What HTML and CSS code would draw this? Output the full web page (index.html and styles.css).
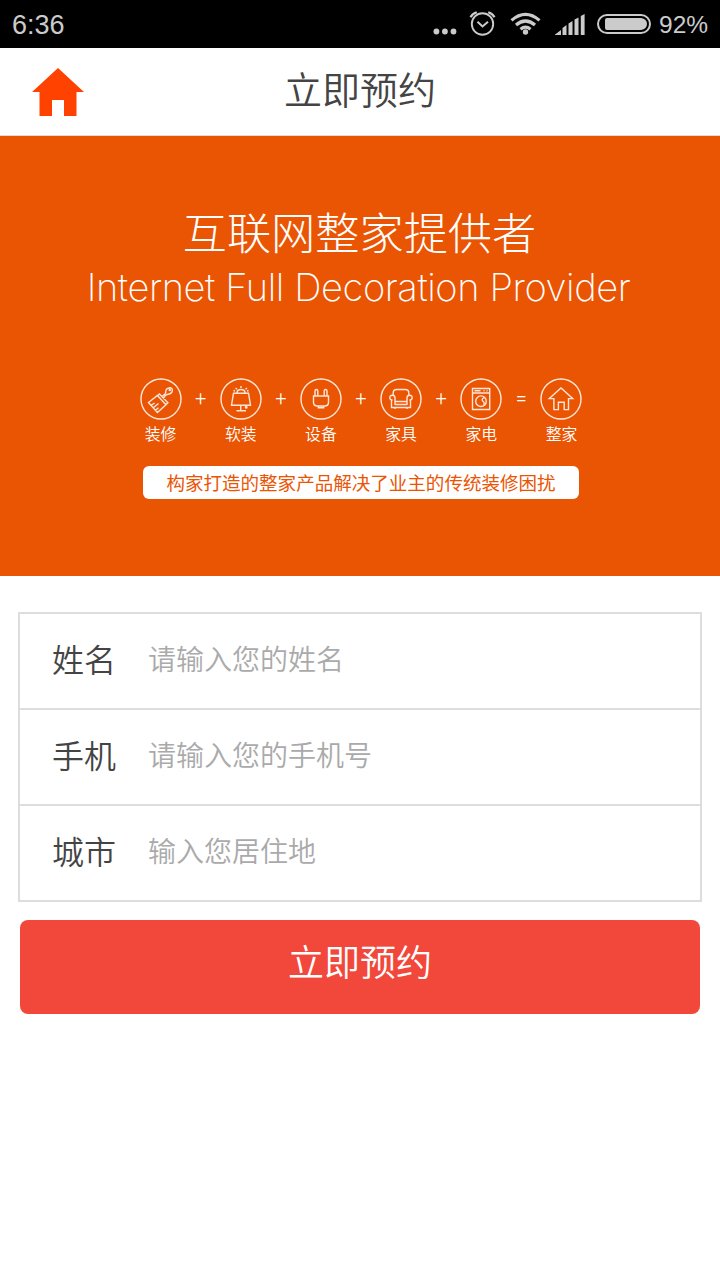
FILE: index.html
```html
<!DOCTYPE html>
<html lang="zh-CN">
<head>
<meta charset="utf-8">
<title>立即预约</title>
<link rel="stylesheet" href="styles.css">
</head>
<body>
<div class="status">
  <span class="clock">6:36</span>
  <svg class="status-icons" width="222" height="48" viewBox="430 0 222 48" fill="none" stroke="#cbcbcb">
    <g fill="#cbcbcb" stroke="none"><circle cx="436.4" cy="31.5" r="2.9"/><circle cx="444.9" cy="31.5" r="2.9"/><circle cx="453.5" cy="31.5" r="2.9"/></g>
    <circle cx="482.5" cy="24" r="10.7" stroke-width="1.9"/>
    <path d="M477.5 21.7l5 4.8 5.5-4.8" stroke-width="2"/>
    <path d="M470.5 17.3q2-3.8 6.3-5M494.500 17.300q-2-3.800-6.300-5" stroke-width="2.2"/>
    <path d="M511.500 20.400q14-12 28 0M516 25q9.500-8 19 0M520.500 29.200q5-4 10 0" stroke-width="3.200"/>
    <circle cx="525.500" cy="32" r="2.700" fill="#cbcbcb" stroke="none"/>
    <path d="M554.500 35l6.500-5v5zM562.500 35v-7l4-3v10zM568.500 35V23.500l4-2.500v14zM574.500 35V19.500l4-2V35zM580.800 35V16l3.800-2v21z" fill="#cbcbcb" stroke="none"/>
    <rect x="598" y="15" width="52" height="18" rx="9" stroke-width="2"/>
    <path d="M607 18h34q6 1 6 6t-6 6h-34q-2 0-2-2v-8q0-2 2-2z" fill="#cbcbcb" stroke="none"/>
  </svg>
  <span class="percent">92%</span>
</div>
<header class="topbar">
  <svg class="home" width="52" height="48" viewBox="0 0 52 48"><path d="M26 0L52 24H44.500V48H32V32H20V48H7.500V24H0z" fill="#ff4200"/></svg>
  <h1 class="title">立即预约</h1>
</header>
<section class="banner">
  <p class="slogan">互联网整家提供者</p>
  <p class="slogan-en">Internet Full Decoration Provider</p>
  <div class="formula">
    <div class="item">
      <svg class="icon" viewBox="0 0 42 42"><circle cx="21" cy="21" r="20"/><path d="M8.500 24.500l8.900-7 8.600 9.300-8.600 7.700zM17.200 18l2.200-2 8.500 8.700-2.600 2.500M22 18.500l3-2.500q1-1.200.8-3 .5-2.800 4.200-3.200 3 .4 2.200 3.400-1 2.900-4.200 3-2 .2-3 1.800l-2 2.500M11 27.500l3.500-2.500M13 30l5.500-4.500M15.500 32.200l3-2.500"/><circle cx="29.800" cy="12" r=".6"/></svg>
      <span class="name">装修</span>
    </div>
    <span class="op">+</span>
    <div class="item">
      <svg class="icon" viewBox="0 0 42 42"><circle cx="21" cy="21" r="20"/><path d="M13.500 15.200h15l2 12h-19zM20.700 27v6M16.500 32.700h9.500M26.200 27v2.500"/><circle cx="26.200" cy="29.300" r=".8"/><path d="M17 15q0-3.500 4-3.500t4 3.500M21 8v2M15.500 10l1.500 1.200M27 10l-1.500 1.200M13.500 12.500l1.500.5M28.500 12.500l-1.500.5"/></svg>
      <span class="name">软装</span>
    </div>
    <span class="op">+</span>
    <div class="item">
      <svg class="icon" viewBox="0 0 42 42"><circle cx="21" cy="21" r="20"/><path d="M13.500 18h15v6.500q0 3.500-4 3.500h-7q-4 0-4-3.500zM15 18v-5q0-1.500 1.400-1.500t1.400 1.500v5M24.200 18v-5q0-1.500 1.400-1.500T27 13v5M18.300 28v1.800h5.400V28"/></svg>
      <span class="name">设备</span>
    </div>
    <span class="op">+</span>
    <div class="item">
      <svg class="icon" viewBox="0 0 42 42"><circle cx="21" cy="21" r="20"/><path d="M13.200 17v-2q0-3.500 3.500-3.500h8.600q3.500 0 3.500 3.500v2M15 23.500h12M15 26.500h12M11.500 22v7.500h19V22M15 30v1M27 30v1"/><path d="M15 27v-7q0-2.700-2.700-2.700t-2.500 2.500q.2 2.300 2.700 2.200M27 27v-7q0-2.700 2.700-2.700t2.500 2.500q-.2 2.300-2.700 2.200"/></svg>
      <span class="name">家具</span>
    </div>
    <span class="op">+</span>
    <div class="item">
      <svg class="icon" viewBox="0 0 42 42"><circle cx="21" cy="21" r="20"/><path d="M12.500 10.500h17.200v21H12.500zM12.500 15h17.200M14.500 12.800h6M23.500 12.800h1M26.500 12.800h1"/><circle cx="21" cy="23.200" r="5.300"/><path d="M24 19.700q-3 1.500-1 3.500 2 1.500.5 3.500"/></svg>
      <span class="name">家电</span>
    </div>
    <span class="op">=</span>
    <div class="item">
      <svg class="icon" viewBox="0 0 42 42"><circle cx="21" cy="21" r="20"/><path d="M9.300 20.600L21 10l11.700 10.600h-4.200v11h-4.300v-7.300h-5.800v7.300h-4.500v-11z"/></svg>
      <span class="name">整家</span>
    </div>
  </div>
  <p class="note">构家打造的整家产品解决了业主的传统装修困扰</p>
</section>
<form class="form">
  <div class="fields">
    <label class="row"><span class="label">姓名</span><input class="input" type="text" placeholder="请输入您的姓名"></label>
    <label class="row"><span class="label">手机</span><input class="input" type="tel" placeholder="请输入您的手机号"></label>
    <label class="row"><span class="label">城市</span><input class="input" type="text" placeholder="输入您居住地"></label>
  </div>
  <button class="submit" type="button">立即预约</button>
</form>
</body>
</html>
```
FILE: styles.css
```css
* { box-sizing: border-box; }
body {
  margin: 0;
  min-height: 1280px;
  background: #fff;
  color: #444;
  font-family: "Noto Sans CJK SC DemiLight", "Noto Sans CJK SC", sans-serif;
  font-weight: 350;
}
p, h1 { margin: 0; font-weight: 350; }
.status {
  display: flex;
  align-items: center;
  height: 48px;
  padding: 0 12px;
  background: #000;
  color: #cbcbcb;
  font-family: "Liberation Sans", sans-serif;
  font-weight: 400;
}
.clock { font-size: 27px; line-height: 48px; padding-top: 2px; }
.status-icons { margin-left: auto; }
.percent { width: 49px; margin-left: 7px; padding-top: 2px; font-size: 24.500px; line-height: 48px; }
.topbar {
  display: grid;
  grid-template-columns: 52px 1fr 52px;
  align-items: center;
  height: 88px;
  padding: 0 32px;
  border-bottom: 1px solid #ddd;
}
.title { padding-bottom: 8px; font-size: 38px; line-height: 78px; text-align: center; }
.banner {
  display: flex;
  flex-direction: column;
  align-items: center;
  height: 440px;
  padding-top: 65px;
  background: #ea5504;
  color: #fff;
}
.slogan {
  margin-right: 1px;
  font-family: "Noto Sans CJK SC", sans-serif;
  font-size: 44.200px;
  line-height: 61px;
  font-weight: 300;
}
.slogan-en {
  margin-right: 3px;
  font-family: Inter, sans-serif;
  font-size: 38px;
  font-weight: 200;
  letter-spacing: -.4px;
  line-height: 50px;
  white-space: nowrap;
}
.formula { display: flex; margin-top: 66px; margin-left: 2px; }
.item { display: flex; flex-direction: column; align-items: center; width: 42px; }
.icon {
  width: 42px;
  height: 42px;
  fill: none;
  stroke: #ffe6d8;
  stroke-width: 1.400;
}
.name { margin-top: 1px; font-size: 15.800px; line-height: 26px; white-space: nowrap; }
.op {
  width: 38.200px;
  font-family: Roboto, sans-serif;
  font-size: 20px;
  font-weight: 300;
  line-height: 41px;
  text-align: center;
}
.note {
  width: 436px;
  height: 33px;
  margin-top: 19px;
  margin-left: 2px;
  border-radius: 6px;
  background: #fff;
  color: #ea5504;
  font-family: "Noto Sans CJK SC", sans-serif;
  font-size: 18.550px;
  font-weight: 400;
  line-height: 31px;
  text-align: center;
  white-space: nowrap;
}
.form { padding: 36px 18px 0; }
.fields { border: 2px solid #ddd; }
.row { display: flex; height: 96px; align-items: center; padding-left: 32px; }
.row + .row { border-top: 2px solid #ddd; }
.row:first-child { height: 94px; }
.label { width: 96px; padding-bottom: 5px; font-size: 32px; line-height: 89px; }
.input {
  flex: 1;
  height: 90px;
  padding: 0 0 6px;
  border: 0;
  outline: 0;
  background: none;
  font: inherit;
  font-size: 28px;
}
.input::placeholder { color: #aaa; opacity: 1; }
.submit {
  display: block;
  width: 680px;
  height: 94px;
  margin: 18px auto 0;
  padding: 0 0 14px;
  border: 0;
  border-radius: 8px;
  background: #f2483b;
  color: #fff;
  font: inherit;
  font-size: 36px;
}
```
